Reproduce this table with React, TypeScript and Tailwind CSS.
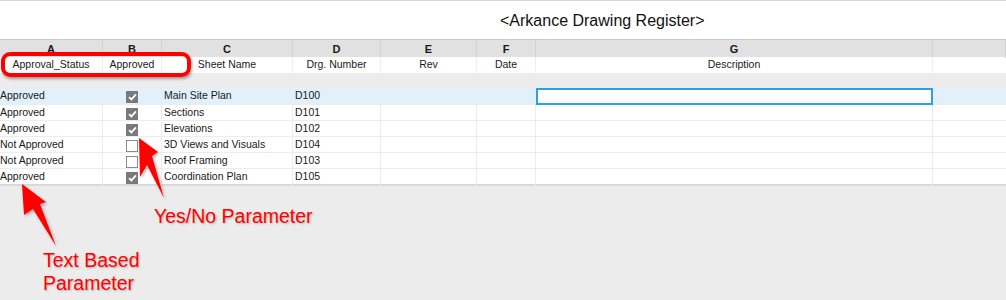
import React from 'react';

const cols = 'grid grid-cols-[103px_59px_131px_88px_96px_59px_397px_73px]';
const letters = ['A', 'B', 'C', 'D', 'E', 'F', 'G', ''];

const rows = [
    { status: 'Approved', ok: true, name: 'Main Site Plan', num: 'D100' },
    { status: 'Approved', ok: true, name: 'Sections', num: 'D101' },
    { status: 'Approved', ok: true, name: 'Elevations', num: 'D102' },
    { status: 'Not Approved', ok: false, name: '3D Views and Visuals', num: 'D104' },
    { status: 'Not Approved', ok: false, name: 'Roof Framing', num: 'D103' },
    { status: 'Approved', ok: true, name: 'Coordination Plan', num: 'D105' },
];

function Check({ on }: { on: boolean }) {
    if (!on) return <div className="w-[12px] h-[12px] bg-white border border-[#8a8a8a]" />;
    return (
        <div className="w-[12px] h-[12px] bg-[#7a7a7a] flex items-center justify-center">
            <svg width="9" height="8" viewBox="0 0 9 8">
                <path d="M1 4.2 L3.4 6.4 L8 1.4" stroke="#fff" strokeWidth="1.8" fill="none" />
            </svg>
        </div>
    );
}

export default function App() {
    return (
        <div className="relative w-[1006px] h-[300px] bg-[#ececec] overflow-hidden text-[#1a1a1a] font-['Liberation_Sans',Arial,sans-serif]">
            <div className="h-[39px] bg-white border-t border-[#d6d6d6] flex items-center pl-[500px] pt-[2px]">
                <span className="text-[16px] text-[#111]">&lt;Arkance Drawing Register&gt;</span>
            </div>

            <div className={`${cols} h-[18px] bg-[#e1e1e1] border-t border-[#c9c9c9] text-[11px] font-bold`}>
                {letters.map((l, i) => (
                    <div key={i} className="flex items-center justify-center border-r border-[#d2d2d2] pt-[1px]">{l}</div>
                ))}
            </div>

            <div className={`${cols} h-[16px] bg-white text-[10.5px]`}>
                <div className="flex items-center justify-center border-r border-[#f0f0f0]">Approval_Status</div>
                <div className="flex items-center justify-center border-r border-[#f0f0f0]">Approved</div>
                <div className="flex items-center justify-center border-r border-[#f0f0f0]">Sheet Name</div>
                <div className="flex items-center justify-center border-r border-[#f0f0f0]">Drg. Number</div>
                <div className="flex items-center justify-center border-r border-[#f0f0f0]">Rev</div>
                <div className="flex items-center justify-center border-r border-[#f0f0f0]">Date</div>
                <div className="flex items-center justify-center border-r border-[#f0f0f0]">Description</div>
                <div />
            </div>

            <div className="h-[15px]" />

            <div className="border-b-2 border-[#d9d9d9]">
                {rows.map((r, i) => {
                    const sel = i === 0;
                    return (
                        <div key={i} className={`${cols} h-[16px] text-[10.5px] ${sel ? 'bg-[#e1f0fa]' : 'bg-white border-t border-[#ececec]'}`}>
                            <div className="flex items-center border-r border-[#ececec] whitespace-nowrap pb-[1px]">{r.status}</div>
                            <div className="flex items-center justify-center border-r border-[#ececec] pt-[2px]"><Check on={r.ok} /></div>
                            <div className="flex items-center pl-[2px] border-r border-[#ececec] whitespace-nowrap pb-[1px]">{r.name}</div>
                            <div className="flex items-center pl-[2px] border-r border-[#ececec] pb-[1px]">{r.num}</div>
                            <div className="border-r border-[#ececec]" />
                            <div className="border-r border-[#ececec]" />
                            <div className={sel ? 'bg-white border-2 border-[#2aa3e4]' : 'border-r border-[#ececec]'} />
                            <div />
                        </div>
                    );
                })}
            </div>

            {/* annotations */}
            <div className="absolute left-[1px] top-[52px] w-[190px] h-[25px] border-4 border-[#f00] rounded-[9px] shadow-[1px_2px_3px_rgba(0,0,0,0.35)]" />

            <svg className="absolute left-0 top-0 pointer-events-none" width="1006" height="300" viewBox="0 0 1006 300">
                <defs>
                    <filter id="sh" x="-20%" y="-20%" width="140%" height="140%">
                        <feDropShadow dx="1.5" dy="1.5" stdDeviation="1.5" floodColor="#000" floodOpacity="0.3" />
                    </filter>
                </defs>
                <polygon points="22,184 46,202 40,204 56,246 33,209 24,215" fill="#f00" filter="url(#sh)" />
                <polygon points="139,138 158,152 152,156 164,198 147,165 140,177" fill="#f00" filter="url(#sh)" />
            </svg>

            <div className="absolute left-[154px] top-[205px] text-[19.5px] leading-[23px] text-[#f00] [text-shadow:1px_1px_2px_rgba(0,0,0,0.25)]">
                Yes/No Parameter
            </div>
            <div className="absolute left-[43px] top-[249px] text-[19.5px] leading-[23px] text-[#f00] [text-shadow:1px_1px_2px_rgba(0,0,0,0.25)]">
                Text Based<br />Parameter
            </div>
        </div>
    );
}
